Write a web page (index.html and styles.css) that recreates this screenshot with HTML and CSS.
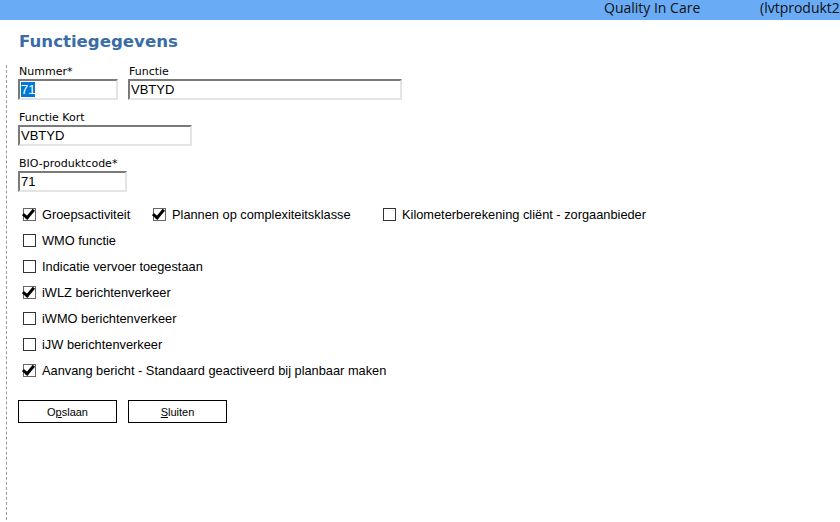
FILE: index.html
```html
<!DOCTYPE html>
<html lang="nl">
<head>
    <meta charset="UTF-8">
    <title>Functiegegevens</title>
    <link rel="stylesheet" href="styles.css">
</head>
<body>

    <header class="top-bar">
        <span class="app-name">Quality In Care</span>
        <span class="env-name">(lvtprodukt2</span>
    </header>

    <h1 class="page-title">Functiegegevens</h1>

    <div class="form-area">
        <div class="field-row">
            <div class="field">
                <label>Nummer*</label>
                <div class="input w-nummer"><span class="sel">71</span></div>
            </div>
            <div class="field">
                <label>Functie</label>
                <div class="input w-functie">VBTYD</div>
            </div>
        </div>

        <div class="field-row">
            <div class="field">
                <label>Functie Kort</label>
                <div class="input w-kort">VBTYD</div>
            </div>
        </div>

        <div class="field-row">
            <div class="field">
                <label>BIO-produktcode*</label>
                <div class="input w-bio">71</div>
            </div>
        </div>

        <div class="checks">
            <div class="check-row">
                <span class="check w-groep"><i class="box on"></i>Groepsactiviteit</span>
                <span class="check w-plannen"><i class="box on"></i>Plannen op complexiteitsklasse</span>
                <span class="check"><i class="box"></i>Kilometerberekening cliënt - zorgaanbieder</span>
            </div>
            <div class="check-row"><span class="check"><i class="box"></i>WMO functie</span></div>
            <div class="check-row"><span class="check"><i class="box"></i>Indicatie vervoer toegestaan</span></div>
            <div class="check-row"><span class="check"><i class="box on"></i>iWLZ berichtenverkeer</span></div>
            <div class="check-row"><span class="check"><i class="box"></i>iWMO berichtenverkeer</span></div>
            <div class="check-row"><span class="check"><i class="box"></i>iJW berichtenverkeer</span></div>
            <div class="check-row"><span class="check"><i class="box on"></i>Aanvang bericht - Standaard geactiveerd bij planbaar maken</span></div>
        </div>

        <div class="buttons">
            <button class="btn">O<u>p</u>slaan</button>
            <button class="btn"><u>S</u>luiten</button>
        </div>
    </div>

</body>
</html>
```

FILE: styles.css
```css
:root { --bar: #6aabf5; --title: #3a6da6; --line: #9a9a9a; }
* { box-sizing: border-box; }

body { margin: 0; background: white; color: #000; font-family: 'DejaVu Sans', Verdana, sans-serif; height: 522px; overflow: hidden; }

/* BALK */
.top-bar { height: 20px; background: var(--bar); display: flex; align-items: flex-start; padding-left: 604px; font-family: 'Open Sans', sans-serif; font-size: 14px; line-height: 16px; color: #111; white-space: nowrap; }
.app-name { width: 156px; flex-shrink: 0; }

/* TITEL */
.page-title { margin: 13px 0 0 19px; font-size: 16.6px; font-weight: bold; color: var(--title); height: 32px; line-height: 18px; }

/* FORMULIER */
.form-area { margin-left: 6px; border-left: 1px dashed var(--line); padding: 0 0 0 11px; height: 460px; }
.field-row { display: flex; gap: 10px; margin-bottom: 11px; }
.field { display: flex; flex-direction: column; }
.field label { font-size: 11px; line-height: 14px; padding-left: 1px; }
.input { height: 21px; border-top: 2px solid #7a7a7a; border-left: 2px solid #7a7a7a; border-right: 2px solid #e4e4e4; border-bottom: 2px solid #e4e4e4; font-family: 'Liberation Sans', Arial, sans-serif; font-size: 13px; line-height: 17px; padding-left: 1px; }
.sel { background: #0078d7; color: white; }
.w-nummer { width: 100px; }
.w-functie { width: 274px; }
.w-kort { width: 174px; }
.w-bio { width: 109px; }

/* VINKJES */
.checks { margin-top: -2px; }
.check-row { display: flex; height: 26px; align-items: center; }
.check { display: inline-flex; align-items: center; font-family: 'Liberation Sans', Arial, sans-serif; font-size: 12.8px; padding-left: 5px; }
.w-groep { width: 130px; }
.w-plannen { width: 230px; }
.box { width: 13px; height: 13px; border: 1px solid #333; background: white; margin-right: 6px; position: relative; }
.box.on { border-color: #666; }
.box.on::after { content: ""; position: absolute; left: 1px; top: -2px; width: 4px; height: 9px; border-right: 3px solid #000; border-bottom: 3px solid #000; transform: rotate(40deg); }

/* KNOPPEN */
.buttons { display: flex; gap: 11px; margin-top: 17px; }
.btn { width: 99px; height: 23px; border: 1px solid #000; background: white; font-family: 'Liberation Sans', Arial, sans-serif; font-size: 11px; padding: 0; cursor: pointer; }
```
